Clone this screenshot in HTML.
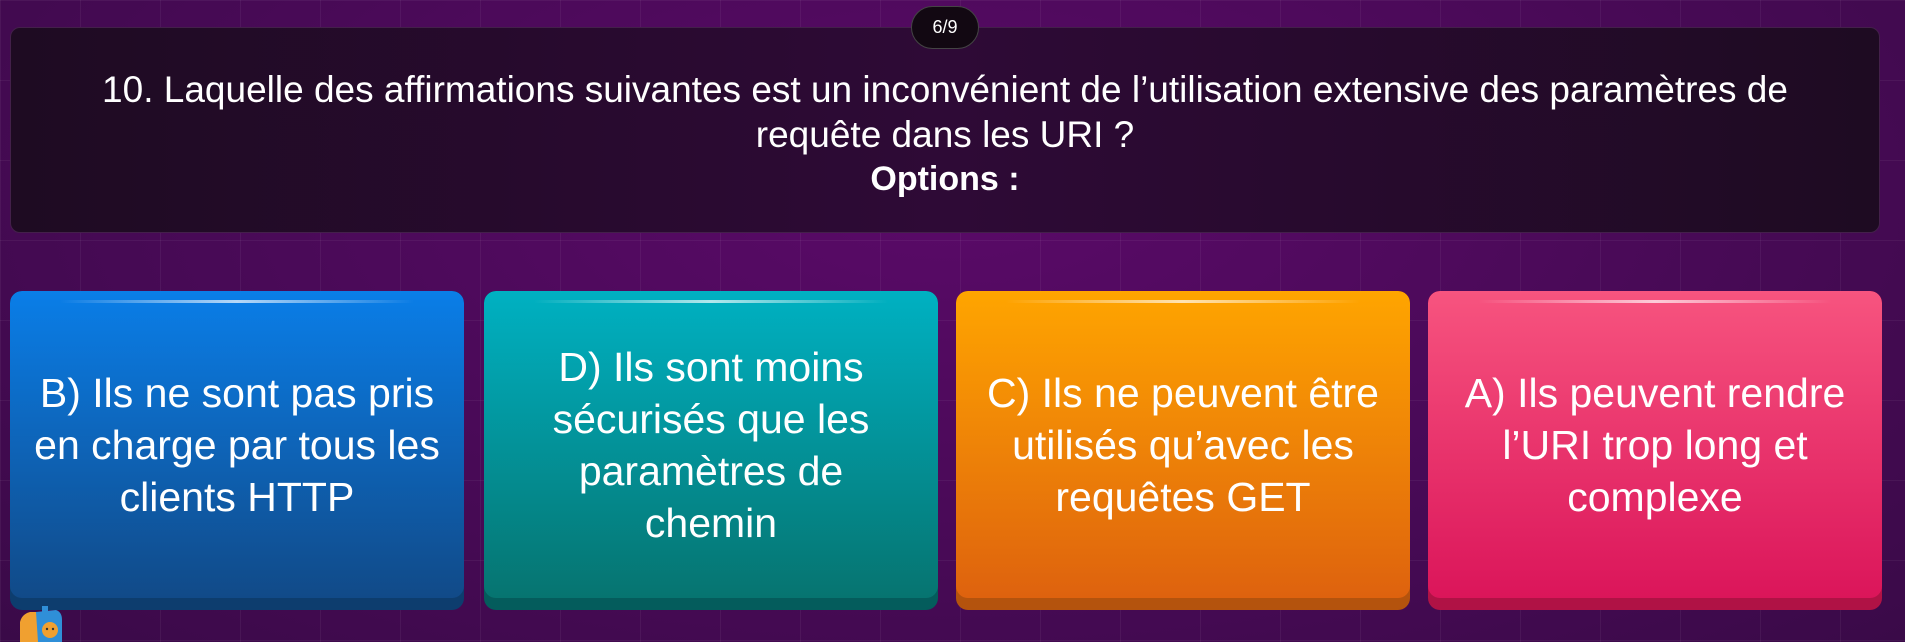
<!DOCTYPE html>
<html><head><meta charset="utf-8"><style>
html,body{margin:0;padding:0}
body{width:1905px;height:642px;overflow:hidden;position:relative;font-family:"Liberation Sans",sans-serif;color:#fff;
background:radial-gradient(ellipse at 50% 30%,#5a0a68 0%,#4a0a58 50%,#3a0a48 100%);}
.grid{position:absolute;inset:0;background-image:linear-gradient(rgba(255,255,255,.05) 1px,transparent 1px),linear-gradient(90deg,rgba(255,255,255,.05) 1px,transparent 1px);background-size:80px 80px;}
.panel{position:absolute;left:10px;top:27px;width:1870px;height:206px;border-radius:10px;background:linear-gradient(90deg,#1e0b22,#2e0a36 50%,#1e0b22);border:1px solid #43204a;box-sizing:border-box;text-align:center;}
.badge{position:absolute;left:911px;top:6px;width:68px;height:43px;border-radius:22px;background:#120812;border:1px solid #444;box-sizing:border-box;font-size:18px;line-height:41px;text-align:center;z-index:2}
.q{position:absolute;left:0;right:0;top:40px;font-size:37px;line-height:44.5px;white-space:nowrap}
.q b{display:block;margin-top:0px;font-size:34px}
.card{position:absolute;top:291px;width:454px;height:319px;border-radius:12px;overflow:hidden;}
.card .face{position:absolute;left:0;top:0;right:0;height:307px;border-radius:12px;display:flex;align-items:center;justify-content:center;text-align:center;font-size:41px;line-height:52px;padding:0 2px;box-sizing:border-box;white-space:nowrap}
.card .hl{position:absolute;left:50px;right:50px;top:9px;height:3px;border-radius:2px;background:linear-gradient(90deg,transparent,rgba(255,255,255,.7),transparent)}
</style></head><body>
<div class="grid"></div>
<div class="badge">6/9</div>
<div class="panel"><div class="q">10. Laquelle des affirmations suivantes est un inconvénient de l’utilisation extensive des paramètres de<br>requête dans les URI ?<b>Options :</b></div></div>

<div class="card" style="left:10px;background:#0d3d6e"><div class="face" style="background:linear-gradient(#0a7ee8,#114a88)">B) Ils ne sont pas pris<br>en charge par tous les<br>clients HTTP</div><div class="hl"></div></div>
<div class="card" style="left:484px;background:#045c5c"><div class="face" style="background:linear-gradient(#00b1c2,#067470)">D) Ils sont moins<br>sécurisés que les<br>paramètres de<br>chemin</div><div class="hl"></div></div>
<div class="card" style="left:956px;background:#b4530d"><div class="face" style="background:linear-gradient(#ffa500,#de620e)">C) Ils ne peuvent être<br>utilisés qu’avec les<br>requêtes GET</div><div class="hl"></div></div>
<div class="card" style="left:1428px;background:#b01245"><div class="face" style="background:linear-gradient(#f7547f,#db155a)">A) Ils peuvent rendre<br>l’URI trop long et<br>complexe</div><div class="hl"></div></div>

<svg style="position:absolute;left:14px;top:604px" width="60" height="38"><path d="M6 38 L6 18 Q8 10 16 8 L40 8 Q46 10 46 18 L46 38Z" fill="#f0a030"/><path d="M22 8 L42 6 Q48 8 48 16 L48 38 L24 38Z" fill="#2f8fd8"/><circle cx="36" cy="26" r="8" fill="#f0a030"/><circle cx="33" cy="25" r="1.2" fill="#333"/><circle cx="39" cy="25" r="1.2" fill="#333"/><rect x="28" y="2" width="6" height="6" fill="#2f8fd8"/></svg>
</body></html>
